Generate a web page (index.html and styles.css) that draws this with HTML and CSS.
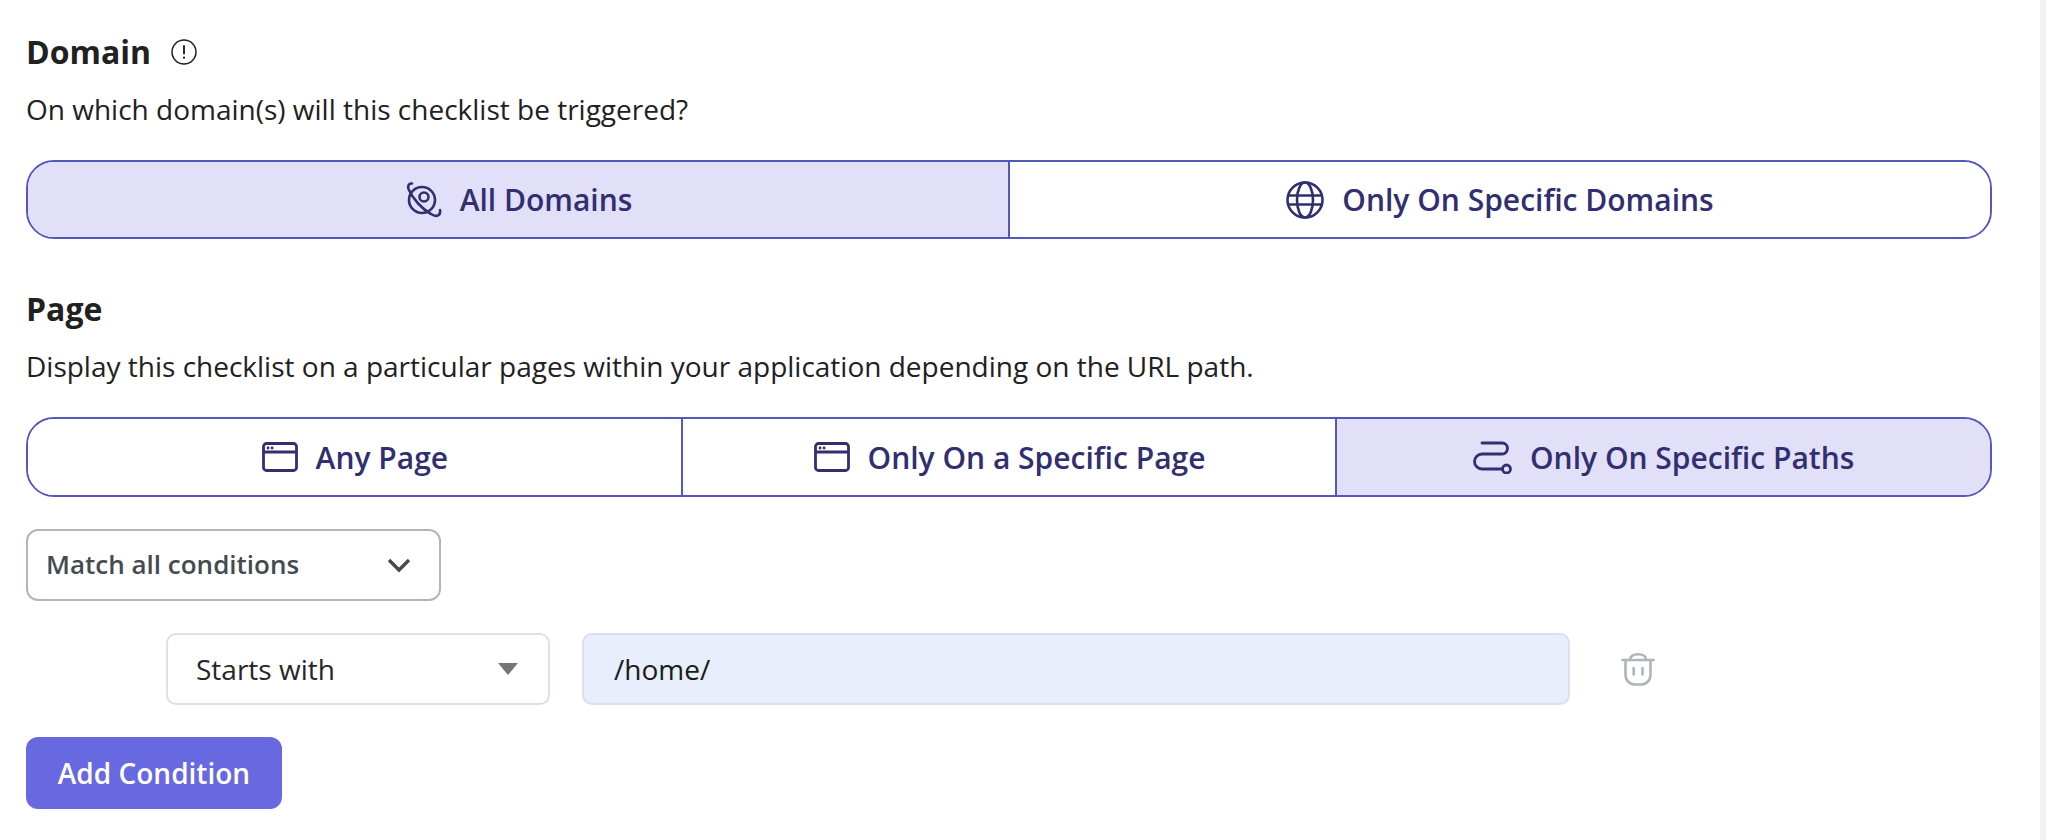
FILE: index.html
```html
<!DOCTYPE html>
<html lang="en">
<head>
<meta charset="utf-8">
<title>Checklist targeting</title>
<link rel="stylesheet" href="styles.css">
</head>
<body>
<main class="panel">
  <section class="section">
    <div class="heading">
      <h2 class="title">Domain</h2>
      <svg class="info" viewBox="0 0 26 26" fill="none" stroke="#1f1f1f" stroke-width="1.500" stroke-linecap="round"><circle cx="13" cy="13" r="12"/><path d="M13 7v7.500" stroke-width="1.900"/><path d="M13 18.500v.2" stroke-width="2.200"/></svg>
    </div>
    <p class="desc">On which domain(s) will this checklist be triggered?</p>
    <div class="segments">
      <div class="segment active">
        <svg class="icon orbit" viewBox="0 0 36 38" fill="none" stroke="currentColor" stroke-width="2.600" stroke-linecap="round"><circle cx="16" cy="19" r="13"/><circle cx="18" cy="16" r="4.500"/><path d="M6 2.500C3 2 1 5 3 9c4 9 13 19 22 24 6 4 10 1 9-4"/></svg>
        <span>All Domains</span>
      </div>
      <div class="segment">
        <svg class="icon globe" viewBox="0 0 38 38" fill="none" stroke="currentColor" stroke-width="2.600"><circle cx="19" cy="19" r="17.500"/><ellipse cx="19" cy="19" rx="8" ry="17.500"/><path d="M2 14.500h34M2 23.500h34"/></svg>
        <span>Only On Specific Domains</span>
      </div>
    </div>
  </section>
  <section class="section page">
    <div class="heading">
      <h2 class="title">Page</h2>
    </div>
    <p class="desc">Display this checklist on a particular pages within your application depending on the URL path.</p>
    <div class="segments">
      <div class="segment">
        <svg class="icon window" viewBox="0 0 36 30" fill="none" stroke="currentColor" stroke-width="2.800"><rect x="1.500" y="1.500" width="33" height="27" rx="3"/><path d="M1.500 10h33"/><path d="M6 6h.1M10 6h.1" stroke-linecap="round"/></svg>
        <span>Any Page</span>
      </div>
      <div class="segment">
        <svg class="icon window" viewBox="0 0 36 30" fill="none" stroke="currentColor" stroke-width="2.800"><rect x="1.500" y="1.500" width="33" height="27" rx="3"/><path d="M1.500 10h33"/><path d="M6 6h.1M10 6h.1" stroke-linecap="round"/></svg>
        <span>Only On a Specific Page</span>
      </div>
      <div class="segment active">
        <svg class="icon route" viewBox="0 0 39 33" fill="none" stroke="currentColor" stroke-width="2.800" stroke-linecap="round"><path d="M9 2h20a5.500 5.500 0 0 1 0 11H9a7.500 7.500 0 0 0 0 15h20"/><circle cx="33.500" cy="28" r="4"/></svg>
        <span>Only On Specific Paths</span>
      </div>
    </div>
  </section>
  <div class="match">
    <span class="match-label">Match all conditions</span>
    <svg class="chev" viewBox="0 0 24 16" fill="none" stroke="#454a50" stroke-width="3.400"><path d="M2 3l10 10 10-10"/></svg>
  </div>
  <div class="condition">
    <div class="select">
      <span>Starts with</span>
      <i class="caret"></i>
    </div>
    <div class="input">/home/</div>
    <svg class="trash" viewBox="0 0 34 33" fill="none" stroke="#b0b5bc" stroke-width="2.600" stroke-linecap="round"><path d="M1.500 7h31"/><path d="M4.500 7v15a9.500 9.500 0 0 0 9.500 9.500h6a9.500 9.500 0 0 0 9.500-9.500V7"/><path d="M9 7c0-3.500 3-5.700 8-5.700s8 2.200 8 5.700"/><path d="M12.700 15v6.500M21.500 15v6.500"/></svg>
  </div>
  <button class="add" type="button">Add Condition</button>
</main>
</body>
</html>
```

FILE: styles.css
```css
* { box-sizing: border-box; }
html, body { margin: 0; padding: 0; background: #fff; }
body {
  width: 2046px;
  height: 840px;
  overflow: hidden;
  font-family: "Open Sans", "Liberation Sans", sans-serif;
  color: #1f1f1f;
}
.panel {
  display: flex;
  flex-direction: column;
  align-items: flex-start;
  width: 2046px;
  height: 840px;
  padding: 32px 0 0 26px;
  border-right: 6px solid #f2f2f2;
}
.section { width: 1966px; }
.page { margin-top: 50px; }
.heading { display: flex; align-items: center; gap: 20px; height: 40px; }
.title { margin: 0; font-size: 32px; line-height: 40px; font-weight: 700; color: #212121; }
.info { width: 26px; height: 26px; }
.desc { margin: 17px 0 0; font-size: 28px; line-height: 40px; color: #212121; }
.segments {
  display: flex;
  width: 100%;
  height: 79px;
  margin-top: 31px;
  border: 2px solid #5457bd;
  border-radius: 28px;
  overflow: hidden;
}
.page .segments { height: 80px; }
.segment {
  flex: 1 1 0;
  display: flex;
  align-items: center;
  justify-content: center;
  gap: 18px;
  background: #fff;
  color: #312f70;
  font-size: 30px;
  font-weight: 600;
}
.segment + .segment { border-left: 2px solid #5457bd; }
.segment.active { background: #e1e0f8; }
.icon { flex: none; }
.orbit { width: 36px; height: 38px; margin-left: 2px; }
.globe { width: 38px; height: 38px; }
.window { width: 36px; height: 30px; margin-left: 1px; }
.route { width: 39px; height: 33px; }
.match {
  display: flex;
  align-items: center;
  justify-content: space-between;
  width: 415px;
  height: 72px;
  margin-top: 32px;
  padding: 0 28px 0 18px;
  border: 2px solid #b0b5bf;
  border-radius: 12px;
  font-size: 26px;
  font-weight: 600;
  color: #454a50;
}
.match-label { margin-bottom: 2px; }
.chev { width: 24px; height: 16px; }
.condition {
  display: flex;
  align-items: center;
  margin: 32px 0 0 140px;
}
.select {
  display: flex;
  align-items: center;
  justify-content: space-between;
  width: 384px;
  height: 72px;
  padding: 0 30px 0 28px;
  border: 2px solid #dcdfec;
  border-radius: 10px;
  font-size: 28px;
  color: #262626;
}
.caret {
  width: 0;
  height: 0;
  border-left: 10px solid transparent;
  border-right: 10px solid transparent;
  border-top: 12px solid #757575;
}
.input {
  display: flex;
  align-items: center;
  width: 988px;
  height: 72px;
  margin-left: 32px;
  padding: 0 30px;
  background: #e8eefb;
  border: 2px solid #dcdfec;
  border-radius: 10px;
  font-size: 28px;
  color: #1a1a1a;
}
.trash { width: 34px; height: 33px; margin-left: 51px; }
.add {
  width: 256px;
  height: 72px;
  margin-top: 32px;
  padding: 0;
  background: #6868e0;
  border: 0;
  border-radius: 12px;
  color: #fff;
  font-family: inherit;
  font-size: 28px;
  font-weight: 600;
}
```
